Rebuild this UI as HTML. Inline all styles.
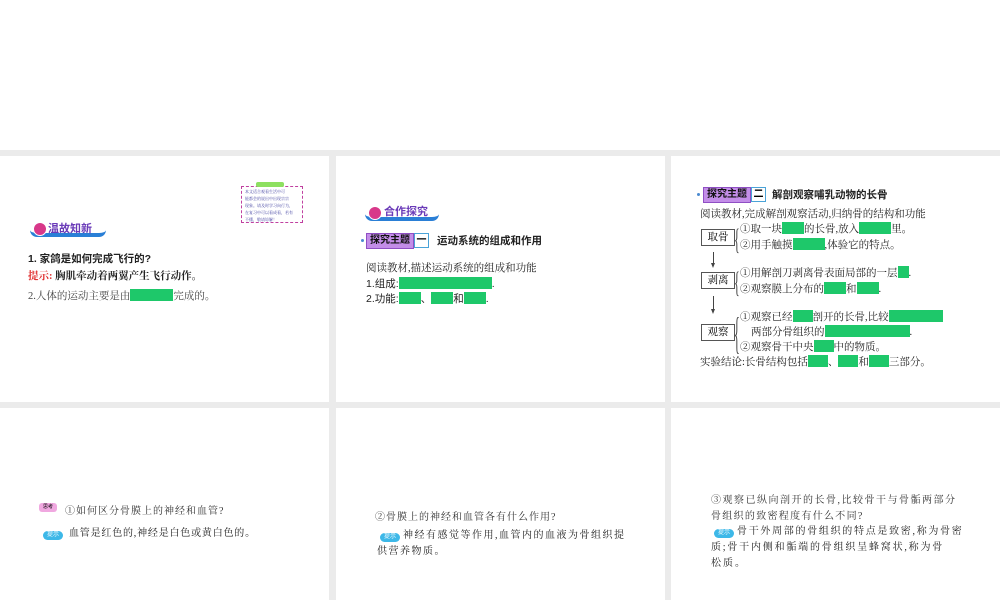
<!DOCTYPE html><html><head><meta charset="utf-8"><style>
body{margin:0;width:1000px;height:600px;background:#fff;position:relative;overflow:hidden;font-family:"Liberation Serif","Noto Serif CJK SC",serif;}
.bg{position:absolute;left:0;top:150px;width:1000px;height:450px;background:#ebebeb}
.p{position:absolute;background:#fff}
.t{position:absolute;white-space:nowrap;font-size:10.5px;color:#222;line-height:14px}
.s{font-family:"Liberation Sans","Noto Sans CJK SC",sans-serif;}
.g{display:inline-block;background:#1ec86a;height:12px;vertical-align:-2px}
.hdr{position:absolute;height:14px;border-radius:7px 7px 7px 7px;border-bottom:4px solid #2a7fd6;}
.hd{position:absolute;font-family:"Liberation Sans","Noto Sans CJK SC",sans-serif;font-weight:bold;color:#6a3ab8;font-size:11px}
.circ{position:absolute;width:12px;height:12px;border-radius:50%;background:#d8388a;border:1px solid #fff}
.tag{position:absolute;background:#c38de8;border:1px solid #8f4fc4;font-family:"Liberation Sans","Noto Sans CJK SC",sans-serif;font-weight:bold;font-size:10px;padding:0 3px;height:14px;line-height:14px;color:#111}
.tn{position:absolute;border:1px solid #4aa3d8;width:13px;height:13px;font-size:10px;line-height:13px;text-align:center;font-family:"Liberation Sans","Noto Sans CJK SC",sans-serif;font-weight:bold}
.box{position:absolute;border:1px solid #555;font-size:10.5px;width:32px;height:15px;line-height:15px;text-align:center}
.tip{position:absolute;background:#3db8e8;border-radius:6px;color:#fff;font-size:6px;width:20px;height:9px;line-height:9px;text-align:center;font-family:"Liberation Sans","Noto Sans CJK SC",sans-serif}
.br{position:absolute;font-size:12px;line-height:12px;color:#444;transform-origin:0 0}
.arr{position:absolute;width:0;height:0;border-left:2.5px solid transparent;border-right:2.5px solid transparent;border-top:5px solid #444}
</style></head><body>
<div class="bg"></div>
<div class="p" style="left:0;top:156px;width:329px;height:246px"></div>
<div class="p" style="left:336px;top:156px;width:329px;height:246px"></div>
<div class="p" style="left:671px;top:156px;width:329px;height:246px"></div>
<div class="p" style="left:0;top:408px;width:329px;height:192px"></div>
<div class="p" style="left:336px;top:408px;width:329px;height:192px"></div>
<div class="p" style="left:671px;top:408px;width:329px;height:192px"></div>

<!-- panel 1 -->
<div style="position:absolute;left:241px;top:186px;width:60px;height:35px;border:1px dashed #c040a0"></div>
<div style="position:absolute;left:256px;top:182px;width:28px;height:5px;background:#8de060;border-radius:2px"></div>
<div class="t" style="left:245px;top:188px;font-size:4px;line-height:7px;color:#4040a0">本文适合观看生活中可<br>能都会的说出中出现宗宗<br>现象。请及时学习向行为，<br>在复习中可以看成看，若有<br>不懂，敬请谅解！</div>
<div class="hdr" style="left:30px;top:219px;width:76px"></div>
<div class="circ" style="left:33px;top:222px"></div>
<div class="hd" style="left:48px;top:220px">温故知新</div>
<div class="t s" style="left:28px;top:252px;font-weight:bold">1. 家鸽是如何完成飞行的?</div>
<div class="t" style="left:28px;top:270px;font-weight:bold"><span style="color:#e03030">提示:</span> 胸肌牵动着两翼产生飞行动作。</div>
<div class="t" style="left:28px;top:289px;color:#444">2.人体的运动主要是由<span class="g" style="width:43px"></span>完成的。</div>

<!-- panel 2 -->
<div class="hdr" style="left:365px;top:203px;width:74px"></div>
<div class="circ" style="left:368px;top:206px"></div>
<div class="hd" style="left:384px;top:203px">合作探究</div>
<div style="position:absolute;left:361px;top:239px;width:3px;height:3px;border-radius:50%;background:#4a8ad0"></div>
<div class="tag" style="left:366px;top:233px">探究主题</div>
<div class="tn" style="left:414px;top:233px">一</div>
<div class="t s" style="left:437px;top:234px;font-weight:bold">运动系统的组成和作用</div>
<div class="t" style="left:366px;top:262px">阅读教材,描述运动系统的组成和功能</div>
<div class="t s" style="left:366px;top:277px">1.组成:<span class="g" style="width:93px"></span>.</div>
<div class="t s" style="left:366px;top:292px">2.功能:<span class="g" style="width:22px"></span>、<span class="g" style="width:22px"></span>和<span class="g" style="width:22px"></span>.</div>

<!-- panel 3 -->
<div style="position:absolute;left:697px;top:193px;width:3px;height:3px;border-radius:50%;background:#4a8ad0"></div>
<div class="tag" style="left:703px;top:187px">探究主题</div>
<div class="tn" style="left:751px;top:187px">二</div>
<div class="t s" style="left:772px;top:188px;font-weight:bold">解剖观察哺乳动物的长骨</div>
<div class="t" style="left:700px;top:208px">阅读教材,完成解剖观察活动,归纳骨的结构和功能</div>
<div class="box" style="left:701px;top:229px">取骨</div>
<div class="br" style="left:734px;top:224px;transform:scaleY(2.5)">{</div>
<div class="t" style="left:740px;top:222px">①取一块<span class="g" style="width:22px"></span>的长骨,放入<span class="g" style="width:32px"></span>里。</div>
<div class="t" style="left:740px;top:238px">②用手触摸<span class="g" style="width:32px"></span>,体验它的特点。</div>
<div style="position:absolute;left:713px;top:252px;width:1px;height:12px;background:#444"></div>
<div class="arr" style="left:711px;top:263px"></div>
<div class="box" style="left:701px;top:272px">剥离</div>
<div class="br" style="left:734px;top:267px;transform:scaleY(2.5)">{</div>
<div class="t" style="left:740px;top:266px">①用解剖刀剥离骨表面局部的一层<span class="g" style="width:11px"></span>.</div>
<div class="t" style="left:740px;top:282px">②观察膜上分布的<span class="g" style="width:22px"></span>和<span class="g" style="width:22px"></span>.</div>
<div style="position:absolute;left:713px;top:296px;width:1px;height:14px;background:#444"></div>
<div class="arr" style="left:711px;top:309px"></div>
<div class="box" style="left:701px;top:324px">观察</div>
<div class="br" style="left:734px;top:311px;transform:scaleY(3.7)">{</div>
<div class="t" style="left:740px;top:310px">①观察已经<span class="g" style="width:20px"></span>剖开的长骨,比较<span class="g" style="width:54px"></span></div>
<div class="t" style="left:751px;top:325px">两部分骨组织的<span class="g" style="width:85px"></span>.</div>
<div class="t" style="left:740px;top:340px">②观察骨干中央<span class="g" style="width:20px"></span>中的物质。</div>
<div class="t" style="left:700px;top:355px">实验结论:长骨结构包括<span class="g" style="width:20px"></span>、<span class="g" style="width:20px"></span>和<span class="g" style="width:20px"></span>三部分。</div>

<!-- panel 4 -->
<div style="position:absolute;left:39px;top:503px;width:18px;height:9px;background:#f0a8e0;border-radius:3px;font-size:5px;line-height:9px;text-align:center;font-family:sans-serif">思考</div>
<div class="t" style="left:65px;top:505px;font-size:10px;color:#333;letter-spacing:1px">①如何区分骨膜上的神经和血管?</div>
<div class="tip" style="left:43px;top:531px">提示</div>
<div class="t" style="left:69px;top:527px;font-size:10px;letter-spacing:0.8px">血管是红色的,神经是白色或黄白色的。</div>

<!-- panel 5 -->
<div class="t" style="left:375px;top:511px;font-size:10px;color:#333;letter-spacing:1px">②骨膜上的神经和血管各有什么作用?</div>
<div class="tip" style="left:380px;top:533px">提示</div>
<div class="t" style="left:403px;top:529px;font-size:10px;letter-spacing:1.5px">神经有感觉等作用,血管内的血液为骨组织提</div>
<div class="t" style="left:377px;top:545px;font-size:10px;letter-spacing:1.5px">供营养物质。</div>

<!-- panel 6 -->
<div class="t" style="left:711px;top:494px;font-size:10px;color:#333;letter-spacing:1.5px">③观察已纵向剖开的长骨,比较骨干与骨骺两部分</div>
<div class="t" style="left:711px;top:510px;font-size:10px;color:#333;letter-spacing:1.3px">骨组织的致密程度有什么不同?</div>
<div class="tip" style="left:714px;top:529px">提示</div>
<div class="t" style="left:737px;top:525px;font-size:10px;letter-spacing:1.7px">骨干外周部的骨组织的特点是致密,称为骨密</div>
<div class="t" style="left:711px;top:541px;font-size:10px;letter-spacing:1.8px">质;骨干内侧和骺端的骨组织呈蜂窝状,称为骨</div>
<div class="t" style="left:711px;top:557px;font-size:10px;letter-spacing:2px">松质。</div>
</body></html>
